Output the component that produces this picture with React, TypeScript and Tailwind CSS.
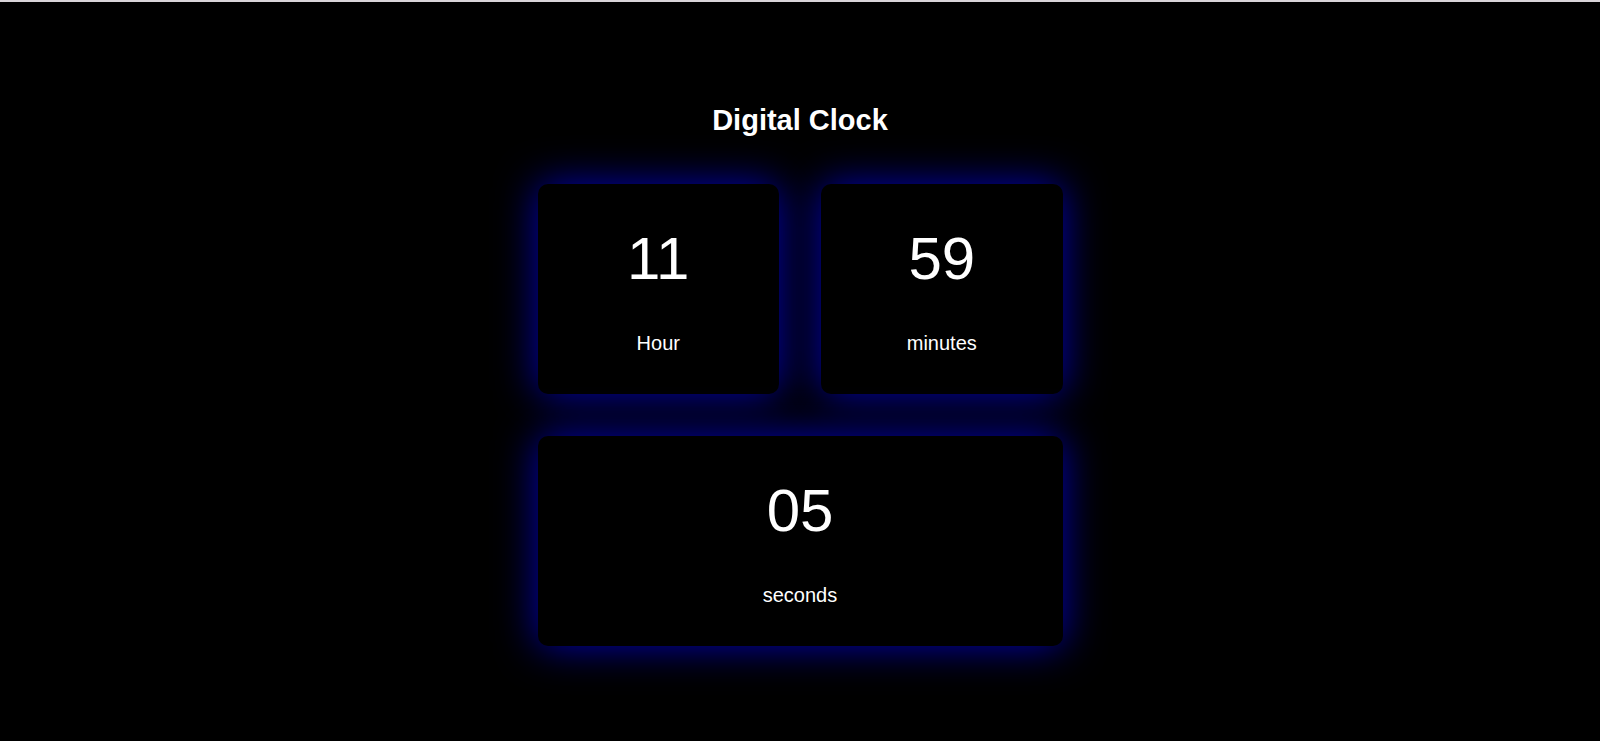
import React from "react"

type Unit = { value: string; label: string; wide?: boolean }

const units: Unit[] = [
  { value: "11", label: "Hour" },
  { value: "59", label: "minutes" },
  { value: "05", label: "seconds", wide: true },
]

function TimeCard({ value, label, wide }: Unit) {
  return (
    <div
      className={`h-[210px] rounded-[10px] bg-black flex flex-col items-center justify-center gap-[39px] shadow-[0_0_40px_#0000b4] ${
        wide ? "col-span-2" : ""
      }`}
    >
      <span className="text-[60px] leading-[69px] text-white">{value}</span>
      <span className="text-[20px] leading-[23px] text-white">{label}</span>
    </div>
  )
}

export default function App() {
  return (
    <div
      className="min-h-screen bg-black border-t-2 border-[#d9d4d9] flex flex-col items-center pt-[102px]"
      style={{ fontFamily: '"Liberation Sans", Arial, sans-serif' }}
    >
      <h1 className="text-[29px] leading-[33px] font-bold text-white">Digital Clock</h1>
      <div className="mt-[47px] w-[525px] grid grid-cols-2 gap-[42px]">
        {units.map((u) => (
          <TimeCard key={u.label} {...u} />
        ))}
      </div>
    </div>
  )
}
